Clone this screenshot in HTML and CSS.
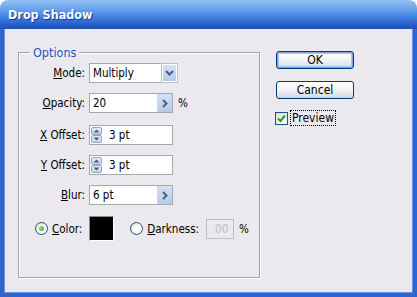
FILE: index.html
```html
<!DOCTYPE html>
<html lang="en">
<head>
    <meta charset="UTF-8">
    <title>Drop Shadow</title>
    <link rel="stylesheet" href="styles.css">
</head>
<body>
    <div class="window">
        <div class="titlebar">Drop Shadow</div>
        <div class="client">
            <fieldset class="group">
                <legend>Options</legend>

                <div class="row row-mode">
                    <label class="lbl"><u>M</u>ode:</label>
                    <div class="field select">
                        <span class="value">Multiply</span>
                        <span class="drop-btn">
                            <svg width="9" height="6" viewBox="0 0 9 6"><path d="M1 1 L4.5 4.5 L8 1" fill="none" stroke="#4d5f80" stroke-width="2"/></svg>
                        </span>
                    </div>
                </div>

                <div class="row row-opacity">
                    <label class="lbl"><u>O</u>pacity:</label>
                    <div class="field popup">
                        <span class="value">20</span>
                        <span class="arrow-btn">
                            <svg width="6" height="9" viewBox="0 0 6 9"><path d="M1 1 L4.5 4.5 L1 8" fill="none" stroke="#4d5f80" stroke-width="2"/></svg>
                        </span>
                    </div>
                    <span class="unit">%</span>
                </div>

                <div class="row row-x">
                    <label class="lbl"><u>X</u> Offset:</label>
                    <div class="field spinner">
                        <span class="spin">
                            <span class="spin-part"><svg width="7" height="4" viewBox="0 0 7 4"><path d="M0.5 3.5 L3.5 0.5 L6.5 3.5 Z" fill="#4d5f80"/></svg></span>
                            <span class="spin-part"><svg width="7" height="4" viewBox="0 0 7 4"><path d="M0.5 0.5 L3.5 3.5 L6.5 0.5 Z" fill="#4d5f80"/></svg></span>
                        </span>
                        <span class="value">3 pt</span>
                    </div>
                </div>

                <div class="row row-y">
                    <label class="lbl"><u>Y</u> Offset:</label>
                    <div class="field spinner">
                        <span class="spin">
                            <span class="spin-part"><svg width="7" height="4" viewBox="0 0 7 4"><path d="M0.5 3.5 L3.5 0.5 L6.5 3.5 Z" fill="#4d5f80"/></svg></span>
                            <span class="spin-part"><svg width="7" height="4" viewBox="0 0 7 4"><path d="M0.5 0.5 L3.5 3.5 L6.5 0.5 Z" fill="#4d5f80"/></svg></span>
                        </span>
                        <span class="value">3 pt</span>
                    </div>
                </div>

                <div class="row row-blur">
                    <label class="lbl"><u>B</u>lur:</label>
                    <div class="field popup">
                        <span class="value">6 pt</span>
                        <span class="arrow-btn">
                            <svg width="6" height="9" viewBox="0 0 6 9"><path d="M1 1 L4.5 4.5 L1 8" fill="none" stroke="#4d5f80" stroke-width="2"/></svg>
                        </span>
                    </div>
                </div>

                <div class="color-row">
                    <span class="radio checked"><span class="dot"></span></span>
                    <span class="radio-lbl"><u>C</u>olor:</span>
                    <span class="swatch"></span>
                    <span class="radio"></span>
                    <span class="radio-lbl"><u>D</u>arkness:</span>
                    <span class="small-field">.00</span>
                    <span class="unit">%</span>
                </div>
            </fieldset>

            <div class="side">
                <button class="btn default">OK</button>
                <button class="btn">Cancel</button>
                <div class="check-row">
                    <span class="checkbox">
                        <svg width="9" height="9" viewBox="0 0 9 9"><path d="M1 4.5 L3.5 7 L8 1.5" fill="none" stroke="#21a121" stroke-width="2"/></svg>
                    </span>
                    <span class="check-lbl">Preview</span>
                </div>
            </div>
        </div>
    </div>
</body>
</html>
```

FILE: styles.css
```css
body {
    margin: 0;
    font-family: "DejaVu Sans Condensed", "DejaVu Sans", sans-serif;
    font-size: 11.5px;
    color: #000;
    background-color: #fff;
}
.window {
    width: 417px;
    height: 297px;
    box-sizing: border-box;
    display: flex;
    flex-direction: column;
}
.titlebar {
    height: 29px;
    box-sizing: border-box;
    padding: 7px 0 0 8px;
    border-radius: 8px 8px 0 0;
    background: linear-gradient(to bottom, #93c2f4 0%, #72a9ee 25%, #3f80e2 60%, #2a5cc8 85%, #2450b6 100%);
    color: #fff;
    font-weight: bold;
    font-size: 12.5px;
    text-shadow: 1px 1px 0 #1a3a8a;
}
.client {
    flex: 1;
    display: flex;
    gap: 16px;
    align-items: flex-start;
    padding: 16px 0 0 14px;
    background-color: #ebe9ed;
    border: 4px solid #2f66d0;
    border-top: none;
    box-shadow: inset 1px 0 0 #6496e6, inset -1px 0 0 #6496e6, inset 0 -1px 0 #6496e6;
}
.group {
    margin: 0;
    padding: 0;
    width: 242px;
    height: 233px;
    box-sizing: border-box;
    border: 1px solid #a3a3a3;
    box-shadow: inset 1px 1px 0 #fff, 1px 1px 0 #fff;
    border-radius: 0;
}
.group legend {
    margin-left: 11px;
    padding: 0 3px;
    color: #2253c6;
    font-size: 12.5px;
}
.row {
    display: flex;
    align-items: center;
    height: 20px;
    margin-top: 10px;
}
.row-mode {
    margin-top: 3px;
}
.row-x {
    margin-top: 12px;
}
.lbl {
    width: 66px;
    text-align: right;
    margin-right: 4px;
}
.field {
    height: 20px;
    box-sizing: border-box;
    border: 1px solid #a4a9b0;
    background-color: #fff;
    display: flex;
    align-items: center;
}
.value {
    flex: 1;
    padding-left: 3px;
}
.select {
    width: 89px;
}
.drop-btn, .arrow-btn {
    width: 15px;
    height: 18px;
    box-sizing: border-box;
    display: flex;
    align-items: center;
    justify-content: center;
    background: linear-gradient(to bottom, #d3e1f5, #b5cbeb);
    border-left: 1px solid #c9d5e6;
}
.drop-btn {
    border: 1px solid #fff;
    box-shadow: 0 0 0 1px #b4c1d4;
}
.popup, .spinner {
    width: 84px;
}
.unit {
    margin-left: 5px;
}
.spinner .value {
    padding-left: 7px;
}
.spin {
    width: 11px;
    height: 16px;
    margin-left: 1px;
    display: flex;
    flex-direction: column;
}
.spin-part {
    flex: 1;
    display: flex;
    align-items: center;
    justify-content: center;
    background: linear-gradient(to bottom, #e4ecf7, #c2d3ec);
    border: 1px solid #9aa8bd;
    border-radius: 2px;
}
.color-row {
    display: flex;
    align-items: center;
    margin-top: 11px;
    padding-left: 16px;
}
.radio {
    width: 13px;
    height: 13px;
    box-sizing: border-box;
    border: 1px solid #1c5180;
    border-radius: 50%;
    background: radial-gradient(circle at 65% 65%, #fff 30%, #d6d6ce 100%);
    display: flex;
    align-items: center;
    justify-content: center;
    margin-left: 16px;
}
.radio:first-child {
    margin-left: 0;
}
.dot {
    width: 5px;
    height: 5px;
    border-radius: 50%;
    background: radial-gradient(circle at 40% 40%, #8fe58f, #21a121);
}
.radio-lbl {
    margin-left: 4px;
}
.swatch {
    width: 25px;
    height: 25px;
    box-sizing: border-box;
    background-color: #000;
    border: 1px solid #888;
    border-right-color: #fff;
    border-bottom-color: #fff;
    margin-left: 7px;
}
.small-field {
    width: 28px;
    height: 20px;
    box-sizing: border-box;
    border: 1px solid #bcbcbc;
    color: #b8bcc4;
    text-align: center;
    line-height: 18px;
    margin-left: 7px;
}
.side {
    display: flex;
    flex-direction: column;
    padding-top: 6px;
}
.btn {
    width: 78px;
    height: 18px;
    box-sizing: border-box;
    border: 1px solid #003c74;
    border-radius: 3px;
    background: linear-gradient(to bottom, #ffffff 0%, #f1f3f6 50%, #d9dfe8 90%, #c4cdda 100%);
    font-family: inherit;
    font-size: 12px;
    padding: 0;
    margin-bottom: 12px;
}
.btn.default {
    box-shadow: inset 0 0 0 1px #7fa3e0, inset 0 0 0 2px #a9c4f0;
}
.check-row {
    display: flex;
    align-items: center;
    margin-top: -1px;
    margin-left: -1px;
}
.checkbox {
    width: 13px;
    height: 13px;
    box-sizing: border-box;
    border: 1px solid #1c5180;
    background: linear-gradient(135deg, #dcdcd7, #fff);
    display: flex;
    align-items: center;
    justify-content: center;
}
.check-lbl {
    margin-left: 2px;
    padding: 0 1px;
    border: 1px dotted #000;
    line-height: 14px;
    font-size: 12px;
}
```
